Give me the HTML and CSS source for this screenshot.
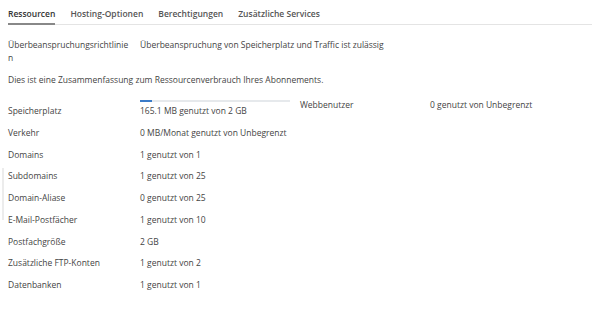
FILE: index.html
```html
<!DOCTYPE html>
<html lang="de">
<head>
    <meta charset="UTF-8">
    <title>Ressourcen</title>
    <link rel="stylesheet" href="styles.css">
</head>
<body>
    <div class="edge"></div>

    <div class="tabs">
        <span class="tab active">Ressourcen</span>
        <span class="tab">Hosting-Optionen</span>
        <span class="tab">Berechtigungen</span>
        <span class="tab">Zusätzliche Services</span>
    </div>

    <div class="policy">
        <div class="label">Überbeanspruchungsrichtlinien</div>
        <div class="value">Überbeanspruchung von Speicherplatz und Traffic ist zulässig</div>
    </div>

    <p class="intro">Dies ist eine Zusammenfassung zum Ressourcenverbrauch Ihres Abonnements.</p>

    <div class="stats">
        <div class="stats-col">
            <div class="row first">
                <div class="label">Speicherplatz</div>
                <div class="value">
                    <div class="bar"><div class="bar-fill" style="width: 8%"></div></div>
                    165.1 MB genutzt von 2 GB
                </div>
            </div>
            <div class="row"><div class="label">Verkehr</div><div class="value">0 MB/Monat genutzt von Unbegrenzt</div></div>
            <div class="row"><div class="label">Domains</div><div class="value">1 genutzt von 1</div></div>
            <div class="row"><div class="label">Subdomains</div><div class="value">1 genutzt von 25</div></div>
            <div class="row"><div class="label">Domain-Aliase</div><div class="value">0 genutzt von 25</div></div>
            <div class="row"><div class="label">E-Mail-Postfächer</div><div class="value">1 genutzt von 10</div></div>
            <div class="row"><div class="label">Postfachgröße</div><div class="value">2 GB</div></div>
            <div class="row"><div class="label">Zusätzliche FTP-Konten</div><div class="value">1 genutzt von 2</div></div>
            <div class="row"><div class="label">Datenbanken</div><div class="value">1 genutzt von 1</div></div>
        </div>
        <div class="stats-col right">
            <div class="row"><div class="label">Webbenutzer</div><div class="value">0 genutzt von Unbegrenzt</div></div>
        </div>
    </div>
</body>
</html>
```

FILE: styles.css
```css
body {
    font-family: 'Open Sans', 'Liberation Sans', sans-serif;
    font-size: 8.5px;
    line-height: 13px;
    color: #444;
    margin: 0;
    padding: 7px 8px;
    background-color: #fff;
}
.edge {
    position: fixed;
    left: 2px;
    top: 168px;
    width: 2px;
    height: 52px;
    background-color: #ececec;
}
.tabs {
    display: flex;
    gap: 15px;
    border-bottom: 1px solid #e4e4e4;
    width: 584px;
}
.tab {
    font-weight: 600;
    color: #555;
    padding: 0 0 3px;
    border-bottom: 2px solid transparent;
    margin-bottom: -1px;
}
.tab.active {
    color: #333;
    border-bottom-color: #888;
}
.policy {
    display: flex;
    margin-top: 13px;
}
.policy .label {
    width: 122px;
    word-break: break-all;
    margin-right: 10px;
}
.intro {
    margin: 9px 0 0;
}
.stats {
    display: flex;
    align-items: flex-start;
    margin-top: 14px;
}
.stats-col {
    width: 302px;
}
.row {
    display: flex;
    align-items: flex-end;
    line-height: 21.75px;
}
.row .label {
    width: 132px;
}
.row .value {
    flex: 1;
}
.right {
    margin-top: -2px;
}
.right .row {
    line-height: 13px;
}
.right .row .label {
    width: 130px;
}
.bar {
    width: 150px;
    height: 2px;
    background-color: #e6e9ec;
    margin-bottom: -2px;
}
.bar-fill {
    height: 100%;
    background-color: #3a7bc8;
}
```
